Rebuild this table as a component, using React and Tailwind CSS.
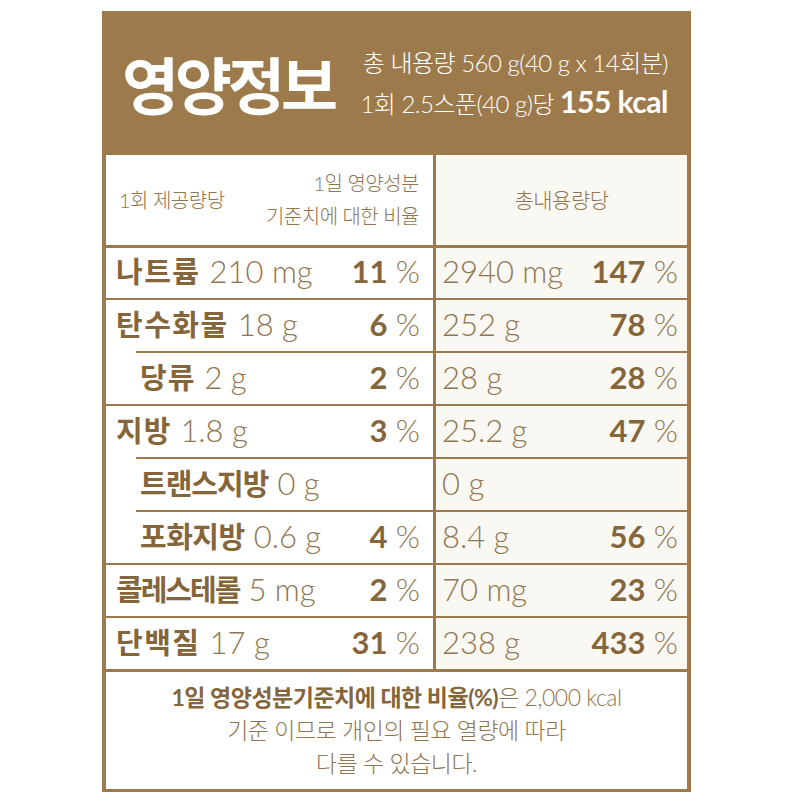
import React from "react";

const rows = [
  { label: "나트륨", val: "210 mg", pct: "11", tot: "2940 mg", tpct: "147", sub: false, tr: "tracking-[1.5px]" },
  { label: "탄수화물", val: "18 g", pct: "6", tot: "252 g", tpct: "78", sub: false, tr: "tracking-[1.5px]" },
  { label: "당류", val: "2 g", pct: "2", tot: "28 g", tpct: "28", sub: true, tr: "tracking-[1px]" },
  { label: "지방", val: "1.8 g", pct: "3", tot: "25.2 g", tpct: "47", sub: false, tr: "tracking-[1px]" },
  { label: "트랜스지방", val: "0 g", pct: null, tot: "0 g", tpct: null, sub: true, tr: "tracking-[-1px]" },
  { label: "포화지방", val: "0.6 g", pct: "4", tot: "8.4 g", tpct: "56", sub: true, tr: "tracking-[-0.5px]" },
  { label: "콜레스테롤", val: "5 mg", pct: "2", tot: "70 mg", tpct: "23", sub: false, tr: "tracking-[-2px]" },
  { label: "단백질", val: "17 g", pct: "31", tot: "238 g", tpct: "433", sub: false, tr: "tracking-[1.5px]" },
];

function Pct({ n }) {
  if (!n) return null;
  return (
    <span className="text-[31px] leading-none whitespace-nowrap">
      <span className="font-bold text-[#85663a]">{n}</span>
      <span className="font-light text-[#8f7650]"> %</span>
    </span>
  );
}

export default function App() {
  return (
    <div className="w-[800px] h-[800px] bg-white pt-[11px] pl-[102px] font-['Lato','Noto_Sans_CJK_KR',sans-serif]">
      <div className="w-[589px] bg-[#9c7a4b] px-[4px] pb-[3px]">
        {/* Header */}
        <div className="h-[144px] flex items-center justify-between pl-[16px] pr-[19px]">
          <div className="text-white font-bold text-[62px] leading-none tracking-[-4px] font-['Noto_Sans_CJK_KR',sans-serif]">
            영양정보
          </div>
          <div className="flex flex-col items-end text-white">
            <div className="text-[24px] leading-[38px] font-light tracking-[-0.5px] whitespace-nowrap">
              총 내용량 560 g(40 g x 14회분)
            </div>
            <div className="text-[24px] leading-[38px] font-light tracking-[-0.5px] whitespace-nowrap">
              1회 2.5스푼(40 g)당 <span className="text-[30px] font-bold tracking-[-0.5px]">155 kcal</span>
            </div>
          </div>
        </div>

        {/* Column header row */}
        <div className="flex h-[90px]">
          <div className="w-[327px] bg-white flex items-center justify-between pl-[13px] pr-[14px] text-[#8f7650] font-light">
            <div className="text-[20px] leading-none tracking-[-0.5px]">1회 제공량당</div>
            <div className="flex flex-col items-end text-[20px] leading-[33px] tracking-[-0.5px]">
              <div>1일 영양성분</div>
              <div>기준치에 대한 비율</div>
            </div>
          </div>
          <div className="flex-1 bg-[#faf8f3] border-l-[3px] border-[#9c7a4b] flex items-center justify-center text-[#8f7650] font-light text-[21px] tracking-[-0.5px]">
            총내용량당
          </div>
        </div>

        {/* Rows */}
        {rows.map((r, i) => (
          <div key={r.label} className="flex h-[53px]">
            <div className="w-[327px] bg-white">
              <div
                className={`h-full flex items-center justify-between pb-[3px] ${i === 0 ? "border-t-[3px]" : "border-t-2"} border-[#9c7a4b] ${
                  r.sub ? "ml-[30px] pl-[4px]" : "pl-[10px]"
                } pr-[13px]`}
              >
                <div className="flex items-baseline gap-[9px] whitespace-nowrap">
                  <span className={`text-[29px] leading-none font-bold text-[#85663a] font-['Noto_Sans_CJK_KR',sans-serif] ${r.tr}`}>
                    {r.label}
                  </span>
                  <span className="text-[31px] leading-none font-light text-[#8f7650]">{r.val}</span>
                </div>
                <Pct n={r.pct} />
              </div>
            </div>
            <div
              className={`flex-1 bg-[#faf8f3] border-l-[3px] ${i === 0 ? "border-t-[3px]" : "border-t-2"} border-[#9c7a4b] flex items-center justify-between pb-[3px] pl-[6px] pr-[9px]`}
            >
              <span className="text-[31px] leading-none font-light text-[#8f7650] whitespace-nowrap">{r.tot}</span>
              <Pct n={r.tpct} />
            </div>
          </div>
        ))}

        {/* Footer */}
        <div className="h-[120px] bg-white border-t-[3px] border-[#9c7a4b] flex flex-col items-center justify-center text-[23px] leading-[33px] text-[#8f7650] font-light tracking-[-0.5px]">
          <div className="whitespace-nowrap">
            <span className="font-bold text-[#85663a]">1일 영양성분기준치에 대한 비율(%)</span>은 2,000 kcal
          </div>
          <div>기준 이므로 개인의 필요 열량에 따라</div>
          <div>다를 수 있습니다.</div>
        </div>
      </div>
    </div>
  );
}
